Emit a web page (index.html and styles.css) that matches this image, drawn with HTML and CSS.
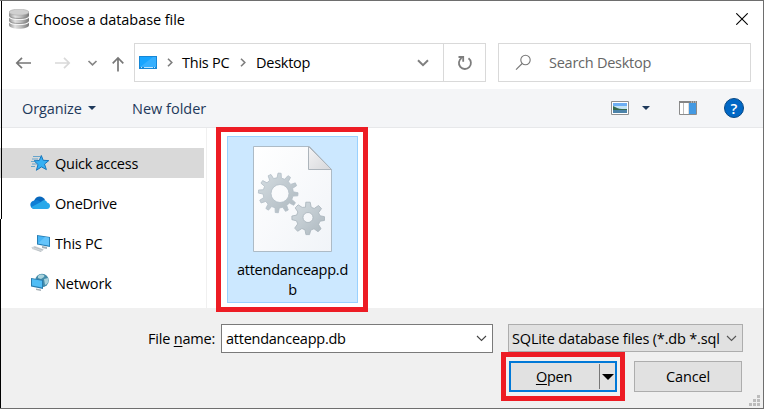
FILE: index.html
```html
<!DOCTYPE html>
<html lang="en">
<head>
<meta charset="utf-8">
<title>Choose a database file</title>
<link rel="stylesheet" href="styles.css">
</head>
<body>
<div class="dialog">
  <header class="titlebar">
    <svg class="db-icon" width="20" height="20" viewBox="0 0 20 20">
      <defs><linearGradient id="metal"><stop offset="0" stop-color="#8f8f8f"/><stop offset=".3" stop-color="#e2e2e2"/><stop offset=".6" stop-color="#bdbdbd"/><stop offset="1" stop-color="#777"/></linearGradient></defs>
      <path d="M0 3v13c0 5 20 5 20 0V3z" fill="url(#metal)"/>
      <ellipse cx="10" cy="3.2" rx="10" ry="3" fill="#d0d0d0" stroke="#aaa" stroke-width=".6"/>
      <path d="M0 7.500c1 4 19 4 20 0M0 12.500c1 4 19 4 20 0" fill="none" stroke="#f4f4f4" stroke-width="1.200"/>
      <path d="M0 6.500c1 4 19 4 20 0M0 11.500c1 4 19 4 20 0" fill="none" stroke="#858585" stroke-width=".7"/>
    </svg>
    <h1 class="title">Choose a database file</h1>
    <svg class="close" width="12" height="12" viewBox="0 0 12 12"><path d="M.3.3l11.400 11.400M11.700.3L.3 11.700" stroke="#000" stroke-width="1.100"/></svg>
  </header>
  <nav class="navbar">
    <svg class="arrows" width="126" height="39" viewBox="0 0 126 39" fill="none" stroke-width="1.700">
      <path d="M31 20H17M22 14.800L16.800 20l5.200 5.200" stroke="#777"/>
      <path d="M55 20h14M64 14.800l5.200 5.200-5.200 5.200" stroke="#d9d9d9"/>
      <path d="M88.500 18l4 3.800 4-3.800" stroke="#858585"/>
      <path d="M118 28.500V15M112.700 20.300L118 15l5.300 5.300" stroke="#777"/>
    </svg>
    <div class="address">
      <svg class="screen" width="18" height="13" viewBox="0 0 18 13"><path d="M0 0h18v13H0z" fill="#1687d6"/><path d="M1 1h16v10H1z" fill="#18a5ff"/><path d="M1 11L14 1h3v10z" fill="#36b0ff"/><path d="M2 11.500h1M5 11.500h9M15 11.500h1" stroke="#bfe5ff"/></svg>
      <svg class="chev c1" width="6" height="9" viewBox="0 0 6 9"><path d="M1 .7l3.800 3.800L1 8.300" fill="none" stroke="#7d7d7d" stroke-width="1.600"/></svg>
      <span class="t pc">This PC</span>
      <svg class="chev c2" width="6" height="9" viewBox="0 0 6 9"><path d="M1 .7l3.800 3.800L1 8.300" fill="none" stroke="#7d7d7d" stroke-width="1.600"/></svg>
      <span class="t desktop">Desktop</span>
      <svg class="drop" width="12" height="8" viewBox="0 0 12 8"><path d="M1 1.300l5 4.800 5-4.800" fill="none" stroke="#7f7f7f" stroke-width="2"/></svg>
      <div class="refresh"><svg width="16" height="16" viewBox="0 0 16 16" fill="none" stroke="#7d7d7d" stroke-width="1.800"><path d="M11.500 3.200A6 6 0 1 1 4.600 3M1.500 2h4.700v4.800"/></svg></div>
    </div>
    <div class="search">
      <svg width="17" height="17" viewBox="0 0 17 17" fill="none" stroke="#777" stroke-width="1.100"><circle cx="10.500" cy="6" r="4.700"/><path d="M7.200 9.500L1 15.700"/></svg>
      <span class="t query">Search Desktop</span>
    </div>
  </nav>
  <div class="toolbar">
    <span class="t organize">Organize</span>
    <i class="tri tri-a"></i>
    <span class="t newfolder">New folder</span>
    <svg class="view" width="18" height="14" viewBox="0 0 18 14"><path d="M.5.5h17v13H.5z" fill="#fff" stroke="#8e8e8e"/><path d="M2 2h14v4H2z" fill="#6daef3"/><path d="M2 5h14v3H2z" fill="#c4e4f5"/><path d="M2 5c3 1 5 3 9 3h5v2H2z" fill="#36694c"/><path d="M2 9h14v3H2z" fill="#4c83a9"/></svg>
    <i class="tri tri-b"></i>
    <svg class="pane" width="18" height="14" viewBox="0 0 18 14"><path d="M.5.5h17v13H.5z" fill="#fff" stroke="#8b8b8b"/><path d="M0 0h18v2H0z" fill="#858585"/><path d="M12 1h1M14 1h1M16 1h1" stroke="#ddd"/><path d="M4.500 2v11" stroke="#bbb"/><path d="M9.500 2v11" stroke="#ddd" /><path d="M10 2h7v11h-7z" fill="#4399e2"/></svg>
    <svg class="help" width="20" height="20" viewBox="0 0 20 20"><circle cx="10" cy="10" r="9.500" fill="#0067c5" stroke="#074784"/><text class="qm" x="10" y="15.500" text-anchor="middle">?</text></svg>
  </div>
  <main class="content">
    <ul class="sidebar">
      <li class="item selected">
        <svg width="20" height="20" viewBox="0 0 20 20"><path d="M11.300 2.500l1.900 4.800 5.600.3-4.300 3.500 1.900 5.500-4.900-2.700-5.100 3.400 1.600-5.800L4 7.800l5.300-.3z" fill="#35b0f3" stroke="#1777bd" stroke-width="1"/><path d="M3 3.500h7M2 6h6M1 8.500h4M2 11h5M1 13.500h4" stroke="#4997c8" stroke-width=".8"/></svg>
        <span class="t quick">Quick access</span></li>
      <li class="item">
        <svg width="20" height="20" viewBox="0 0 20 20"><path d="M4 8c2-6 9-5.500 11-1l-5 6z" fill="#0868bd"/><path d="M4.500 7.500C7 6 9 8 12 9.500L6 16C-1 17-1.500 8 4.500 7.500z" fill="#0f7ed5"/><path d="M11 9c2-3 6-2 6 .5 4 1 4 6 0 6.500H5c-2 0-3-1-3.700-2z" fill="#28a8ea"/></svg>
        <span class="t onedrive">OneDrive</span></li>
      <li class="item">
        <svg width="20" height="20" viewBox="0 0 20 20"><path d="M7 2l13 2v10L7 11.500z" fill="#287fb5"/><path d="M8 3l11 1.800v7.800L8 10.500z" fill="#47b5f5"/><path d="M8 10.500L15 4l4 .8v7.800z" fill="#65c4fa"/><path d="M12 13l5 1v2l-5-1z" fill="#a4b0b7"/><path d="M1 14.500l4-1.500 9 3.500-3 2.500z" fill="#d1d6da"/><path d="M2 15.500l9 3M4 14l9 3" stroke="#aab1b6" stroke-width=".6"/></svg>
        <span class="t mypc">This PC</span></li>
      <li class="item">
        <svg width="20" height="20" viewBox="0 0 20 20"><circle cx="12" cy="7.500" r="6.800" fill="#438ba9"/><path d="M8 3c3-3 8-1 6 1l-3 2-3-1zM14 6l4-1c1 3 0 6-3 7z" fill="#a9d3dd"/><path d="M1 5l12 2v9L1 13.500z" fill="#297cae"/><path d="M2 6l10 1.800v6.800L2 12.500z" fill="#50bdf5"/><path d="M6 15.500l5 1V18l-5-1z" fill="#a6b0b6"/></svg>
        <span class="t network">Network</span></li>
    </ul>
    <section class="files">
      <div class="marker marker-file">
        <div class="tile">
          <svg width="80" height="107" viewBox="0 0 80 107">
            <defs>
              <linearGradient id="paper" x2="1" y2="1"><stop offset="0" stop-color="#fff"/><stop offset="1" stop-color="#f1f4f8"/></linearGradient>
              <linearGradient id="gear" x2="1" y2="1"><stop offset="0" stop-color="#d5dde2"/><stop offset="1" stop-color="#adb8bf"/></linearGradient>
              <linearGradient id="fold" x2="1" y2="1"><stop offset="0" stop-color="#f4f4f5"/><stop offset="1" stop-color="#d6d7da"/></linearGradient>
            </defs>
            <path d="M.5.5h56L78.500 23.500v82H.5z" fill="url(#paper)" stroke="#adbbc6"/>
            <path d="M55.500.5v23h23z" fill="url(#fold)" stroke="#acb4bb"/>
            <path fill="url(#gear)" stroke="#b3bec6" stroke-width=".8" fill-rule="evenodd" d="M24.070 31.820L25.040 27.070L28.130 27.300L28.380 32.140L31.760 33.280L34.980 29.650L37.540 31.390L35.340 35.710L37.700 38.390L42.310 36.860L43.650 39.650L39.590 42.290L40.290 45.790L45.040 46.760L44.810 49.850L39.970 50.100L38.830 53.480L42.460 56.700L40.720 59.260L36.400 57.060L33.720 59.420L35.250 64.030L32.460 65.370L29.820 61.310L26.320 62.010L25.350 66.760L22.260 66.530L22.010 61.690L18.630 60.550L15.410 64.180L12.850 62.440L15.050 58.120L12.690 55.440L8.080 56.970L6.740 54.180L10.800 51.540L10.100 48.040L5.350 47.070L5.580 43.980L10.420 43.730L11.560 40.350L7.930 37.130L9.670 34.570L13.990 36.770L16.670 34.410L15.140 29.800L17.930 28.460L20.570 32.520ZM36 47.500A9 9 0 1 0 18 47.500A9 9 0 1 0 36 47.500Z"/>
            <path fill="url(#gear)" stroke="#a7b3ba" stroke-width=".8" fill-rule="evenodd" d="M52.500 61.200L52.800 56.200h4.400l1 5 3 1.300 4.300-3 3 3.100-2.900 4.100 1.300 3 4.600 1v3.700l-4.600.9-1.400 3.200 2.600 4.300-3.100 2.900-4-2.900-3.200 1.300-1.300 4.500h-3.600l-.9-4.700-3.100-1.400-4.300 2.800-2.900-3.200 3-4.200-1.200-3.100-4.600-1.100v-3.700l4.700-.9 1.300-3.100-2.700-4.100 3-3.100 4 2.600zM60 71.500a5 5 0 1 0-10 0 5 5 0 1 0 10 0z"/>
          </svg>
          <span class="t fname">attendanceapp.d</span>
          <span class="t fname2">b</span>
        </div>
      </div>
    </section>
  </main>
  <footer class="footer">
    <div class="row fields">
      <label class="t label">File <u>n</u>ame:</label>
      <div class="combo input"><span class="t value">attendanceapp.db</span><svg width="11" height="7" viewBox="0 0 11 7"><path d="M1 1l4.500 4.500L10 1" fill="none" stroke="#444" stroke-width="1.100"/></svg></div>
      <div class="combo filter"><span class="t types">SQLite database files (*.db *.sql</span><svg width="11" height="7" viewBox="0 0 11 7"><path d="M1 1l4.500 4.500L10 1" fill="none" stroke="#555" stroke-width="1.100"/></svg></div>
    </div>
    <div class="row actions">
      <div class="marker marker-open">
        <div class="open"><span class="t opentext"><u>O</u>pen</span><span class="split"><i class="tri tri-c"></i></span></div>
      </div>
      <div class="cancel"><span class="t canceltext">Cancel</span></div>
    </div>
    <svg class="grip" width="11" height="11" viewBox="0 0 11 11" fill="#bcbcbc"><path d="M8 0h3v3H8zM4 4h3v3H4zM8 4h3v3H8zM0 8h3v3H0zM4 8h3v3H4zM8 8h3v3H8z"/></svg>
  </footer>
  <i class="edge edge-top"></i><i class="edge edge-bottom"></i>
</div>
</body>
</html>
```
FILE: styles.css
```css
* { box-sizing: border-box; }
body { margin: 0; background: #fff; font: 14.5px/20px "Open Sans", sans-serif; letter-spacing: -0.25px; color: #000; }
svg { display: block; flex: none; }
u { text-decoration-thickness: 1px; text-underline-offset: 2px; }
.t { white-space: nowrap; flex: none; }
.dialog { position: relative; width: 764px; height: 409px; overflow: hidden; display: flex; flex-direction: column; border-top: 1px solid #6e6e6e; border-bottom: 1px solid #6e6e6e; border-right: 1px solid #6e6e6e; }

.titlebar { height: 42px; display: flex; align-items: flex-start; padding: 8px 15px 0 9px; flex: none; }
.title { margin: 1px 0 0 5px; font: inherit; letter-spacing: -0.07px; flex: 1; white-space: nowrap; }
.close { margin-top: 4px; }

.navbar { height: 39px; display: flex; flex: none; }
.arrows { margin-right: 8px; }
.address { width: 352px; border: 1px solid #d9d9d9; display: flex; align-items: center; padding-left: 4px; }
.c1 { margin: 0 9px 0 10px; }
.pc { width: 58px; }
.c2 { margin-right: 10px; }
.desktop { flex: 1; }
.drop { margin-right: 14px; }
.refresh { width: 42px; align-self: stretch; border-left: 1px solid #d9d9d9; display: grid; place-items: center; }
.search { margin-left: 12px; width: 253px; border: 1px solid #d9d9d9; display: flex; align-items: center; padding-left: 16px; color: #666; }
.query { margin-left: 17px; }

.toolbar { margin-top: 7px; height: 39px; flex: none; background: #f4f5f7; border-bottom: 1px solid #e7e8ea; display: flex; align-items: center; padding-left: 22px; color: #1e395b; }
.tri { border: 4px solid transparent; border-top-color: currentColor; border-bottom: 0; flex: none; }
.organize { width: 66px; margin-top: 2px; letter-spacing: -0.12px; }
.newfolder { margin: 2px 0 0 36px; width: 479px; letter-spacing: 0; }
.tri-b { margin: 0 29px 0 13px; }
.help { margin-left: 27px; }
.qm { font: 600 15px "Open Sans", sans-serif; letter-spacing: 0; fill: #fff; }

.content { height: 180px; flex: none; display: flex; }
.sidebar { list-style: none; margin: 0; padding: 20px 2px 0 0; width: 207px; border-right: 1px solid #f0f0f0; display: flex; flex-direction: column; gap: 10px; }
.item { height: 30px; display: flex; align-items: center; gap: 5px; padding-left: 30px; }
.item .t { margin-top: 2px; }
.network { letter-spacing: -0.15px; }
.selected { background: #d9d9d9; }
.marker { border: 5px solid #ed1c24; position: relative; z-index: 1; }
.marker-file { width: 152px; height: 185px; margin: -1px 0 0 9px; padding: 4px 5px 4px 6px; background: #fff; }
.tile { width: 131px; height: 167px; border: 1px solid #99d1ff; background: #cce8ff; display: flex; flex-direction: column; align-items: center; padding-top: 9px; }
.fname { margin-top: 7px; }

.footer { position: relative; height: 100px; flex: none; background: #f0f0f0; }
.row { display: flex; }
.fields { padding: 16px 0 0 148px; align-items: flex-start; }
.label { width: 73px; margin-top: 5px; letter-spacing: -0.2px; }
.combo { display: flex; align-items: center; justify-content: space-between; border: 1px solid #7a7a7a; background: #fff; height: 29px; padding: 0 5px 0 4px; }
.combo .t { margin-top: 1px; }
.input { width: 272px; }
.filter { width: 235px; height: 28px; margin-left: 15px; background: #e1e1e1; border-color: #adadad; padding-left: 3px; }
.types { letter-spacing: -0.17px; }
.actions { padding-left: 501px; margin-top: -1px; }
.marker-open { width: 124px; height: 49px; padding: 4px 3px; background: #f0f0f0; }
.open { width: 108px; height: 31px; border: 2px solid #0078d7; background: #e1e1e1; display: flex; align-items: center; }
.opentext { width: 86px; margin-right: 2px; text-align: center; }
.split { border-left: 1px solid #777; height: 25px; flex: 1; display: grid; place-items: center; }
.tri-c { border-width: 6px 6px 0; }
.cancel { margin: 9px 0 0 9px; width: 108px; height: 31px; border: 1px solid #adadad; background: #e1e1e1; display: grid; place-items: center; }
.canceltext { letter-spacing: -0.15px; }
.grip { position: absolute; right: 3px; bottom: 2px; }
.edge { position: absolute; width: 1px; background: #000; }
.edge-top { left: 1px; top: 0; height: 218px; }
.edge-bottom { left: 0; top: 218px; bottom: 0; }
```
